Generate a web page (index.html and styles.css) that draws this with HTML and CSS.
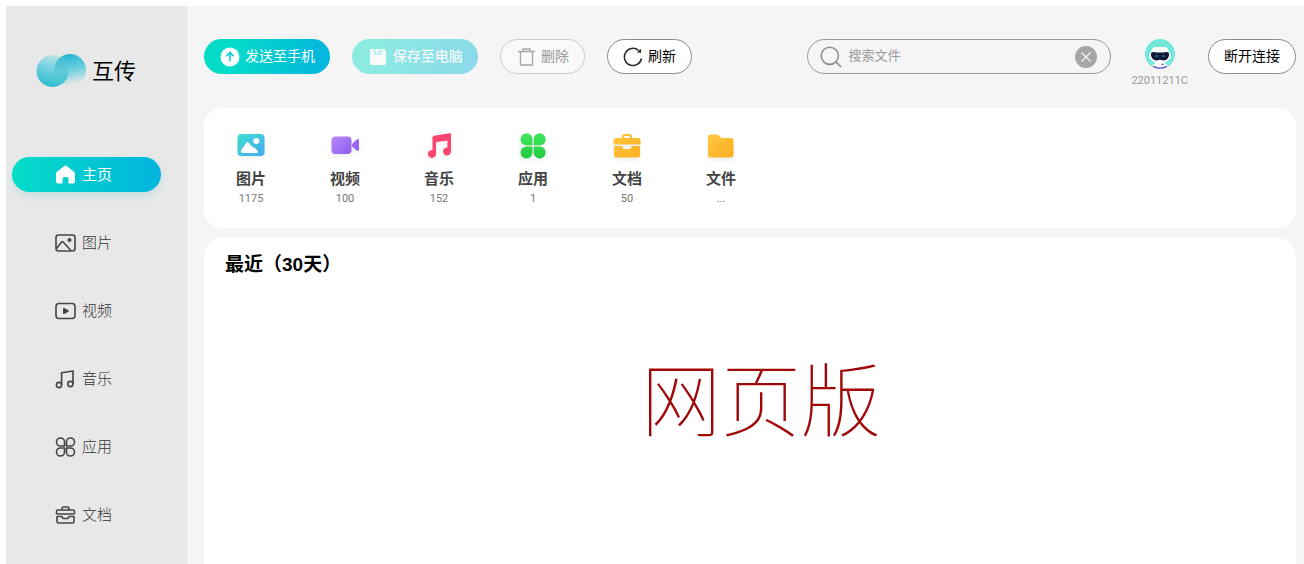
FILE: index.html
```html
<!DOCTYPE html>
<html lang="zh-CN">
<head>
	<meta charset="UTF-8">
	<title>互传</title>
	<link rel="stylesheet" href="styles.css">
</head>
<body>
	<div class="wrap">
		<div class="side">
			<div class="logo">
				<svg width="50" height="34" viewBox="0 0 50 34">
					<defs>
						<linearGradient id="lgA" x1="0.7" y1="0" x2="0.4" y2="1">
							<stop offset="0" stop-color="#c4e6e8"/>
							<stop offset="0.5" stop-color="#6fcfdb"/>
							<stop offset="1" stop-color="#2bbdd3"/>
						</linearGradient>
						<linearGradient id="lgB" x1="0.4" y1="0" x2="0.6" y2="1">
							<stop offset="0" stop-color="#27b4d3"/>
							<stop offset="0.5" stop-color="#6bcfde"/>
							<stop offset="0.95" stop-color="#e6e8e8"/>
						</linearGradient>
						<linearGradient id="lgC" gradientUnits="userSpaceOnUse" x1="26" y1="4" x2="24" y2="31">
							<stop offset="0" stop-color="#3bbcd6"/>
							<stop offset="0.5" stop-color="#62cad9"/>
							<stop offset="1" stop-color="#42c3d5"/>
						</linearGradient>
						<clipPath id="cpA"><circle cx="16.500" cy="18" r="16"/></clipPath>
					</defs>
					<circle cx="34" cy="17" r="16" fill="url(#lgB)"/>
					<circle cx="16.500" cy="18" r="16" fill="url(#lgA)"/>
					<circle cx="34" cy="17" r="16" fill="url(#lgC)" clip-path="url(#cpA)"/>
				</svg>
				<span>互传</span>
			</div>
			<ul class="nav">
				<li class="select"><a href="#">
					<svg width="21" height="20" viewBox="0 0 21 20"><path d="M10.500 0.500Q11.200 0.500 12 1.200L19 6.800Q20 7.600 20 8.800V16.500Q20 18.500 18 18.500H13.500V14Q13.500 12 11.500 12H9.500Q7.500 12 7.500 14V18.500H3Q1 18.500 1 16.500V8.800Q1 7.600 2 6.800L9 1.200Q9.800 0.500 10.500 0.500Z" fill="#fff"/></svg>
					<span>主页</span>
				</a></li>
				<li><a href="#">
					<svg class="line" width="21" height="20" viewBox="0 0 21 20"><rect x="1" y="2" width="19" height="16" rx="2.500"/><path d="M1.500 15.500L6.500 9Q7.300 8.200 8.100 9L16 17.500"/><circle cx="14.500" cy="7" r="1.600" fill="#4a4a4a" stroke-width="1"/></svg>
					<span>图片</span>
				</a></li>
				<li><a href="#">
					<svg class="line" width="21" height="20" viewBox="0 0 21 20"><rect x="1" y="2.500" width="19" height="15" rx="3"/><path d="M8.800 7.800V12.200L13 10Z" fill="#333"/></svg>
					<span>视频</span>
				</a></li>
				<li><a href="#">
					<svg class="line" width="21" height="20" viewBox="0 0 21 20"><circle cx="4" cy="16" r="2.600"/><circle cx="15.400" cy="15" r="2.600"/><path d="M6.600 16V3.800L18 2V15"/></svg>
					<span>音乐</span>
				</a></li>
				<li><a href="#">
					<svg class="line" width="21" height="20" viewBox="0 0 21 20"><path d="M9.500 9H5.500A4 4 0 1 1 9.500 5ZM11.500 9V5A4 4 0 1 1 15.500 9ZM9.500 11V15A4 4 0 1 1 5.500 11ZM11.500 11H15.500A4 4 0 1 1 11.500 15Z"/></svg>
					<span>应用</span>
				</a></li>
				<li><a href="#">
					<svg class="line" width="21" height="20" viewBox="0 0 21 20"><path d="M7 5V3.500Q7 2 8.500 2H12.500Q14 2 14 3.500V5M1.500 9V6.500Q1.500 5 3 5H18Q19.500 5 19.500 6.500V9M1.500 9H19.500M2 11.500V16.500Q2 18 3.500 18H17.500Q19 18 19 16.500V11.500H14Q13.500 13.500 12.500 13.500H8.500Q7.500 13.500 7 11.500Z"/></svg>
					<span>文档</span>
				</a></li>
			</ul>
		</div>
		<div class="main">
			<div class="head">
				<button class="btn send">
					<svg width="20" height="20" viewBox="0 0 20 20"><circle cx="10" cy="10" r="9.500" fill="#fff"/><path d="M10 14.500V5.800M6.300 9.300L10 5.500L13.700 9.300" fill="none" stroke="#0dcdcf" stroke-width="1.600"/></svg>
					<span>发送至手机</span>
				</button>
				<button class="btn send off" disabled>
					<svg width="20" height="20" viewBox="0 0 20 20"><path d="M3.500 2H6.500V6Q6.500 7.500 8 7.500H12Q13.500 7.500 13.500 6V2H16L18 4V16.500Q18 18 16.500 18H3.500Q2 18 2 16.500V3.500Q2 2 3.500 2ZM7.500 2H12.500V5.500Q12.500 6.500 11.500 6.500H8.500Q7.500 6.500 7.500 5.500ZM10.500 3V5.500H11.500V3Z" fill="#fff" fill-rule="evenodd"/></svg>
					<span>保存至电脑</span>
				</button>
				<button class="btn del" disabled>
					<svg width="20" height="20" viewBox="0 0 20 20"><path d="M2 4.500H19M7 4V2H14V4M4.500 5V18H16.500V5" fill="none" stroke="#a8a8a8" stroke-width="1.400"/></svg>
					<span>删除</span>
				</button>
				<button class="btn">
					<svg width="20" height="20" viewBox="0 0 20 20"><path d="M18.500 11.500A8.600 8.600 0 1 1 15.500 3.300" fill="none" stroke="#2b2b2f" stroke-width="1.500"/><path d="M14 5.300L17.800 1.800L18.200 6Z" fill="#2b2b2f"/></svg>
					<span>刷新</span>
				</button>
				<div class="search">
					<svg width="22" height="22" viewBox="0 0 22 22" fill="none" stroke="#8e8e8e" stroke-width="1.600"><circle cx="9.800" cy="9.800" r="8.600"/><path d="M15.900 15.900L21 21"/></svg>
					<input type="text" placeholder="搜索文件" aria-label="搜索文件">
					<button class="clear" aria-label="清空">
						<svg width="22" height="22" viewBox="0 0 22 22"><circle cx="11" cy="11" r="11" fill="#a6a6a6"/><path d="M6.500 6.500L15.500 15.500M15.500 6.500L6.500 15.500" stroke="#f5f5f5" stroke-width="1.300"/></svg>
					</button>
				</div>
				<div class="user">
					<svg width="30" height="30" viewBox="0 0 30 30">
						<circle cx="15" cy="15" r="15" fill="#75e6da"/>
						<path d="M6 13Q6.500 8 11 8H19Q23.500 8 24 13L25.500 14.500V19L24 20.500Q22 23.500 19 24L22.500 26Q23.500 28.500 21 29Q15 31 9 29Q6.500 28.500 7.500 26L11 24Q8 23.500 6 20.500L4.500 19V14.500Z" fill="#fbfbfb"/>
						<path d="M6 14.500Q6.500 12.800 10 13.200Q15 13.900 20 13.200Q23.500 12.800 24 14.500Q24.300 18.500 21.500 20.500Q19 22 16.500 21Q15 20.600 13.500 21Q11 22 8.500 20.500Q5.700 18.500 6 14.500Z" fill="#0d1a35"/>
						<path d="M10 17.500Q11.500 15.800 13 17.500M17 17.500Q18.500 15.800 20 17.500" fill="none" stroke="#3aa5cc" stroke-width="1"/>
						<path d="M8 27.300Q15 31 22 27.300M16.500 25.500H18.500" fill="none" stroke="#6357cf" stroke-width="1.400"/>
					</svg>
					<span>22011211C</span>
				</div>
				<button class="btn"><span>断开连接</span></button>
			</div>
			<ul class="types">
				<li><a href="#">
					<svg width="28" height="28" viewBox="0 0 28 28">
						<defs><linearGradient id="lgPic" x1="0" y1="0" x2="1" y2="1"><stop offset="0" stop-color="#3fe0cf"/><stop offset="1" stop-color="#45a8f2"/></linearGradient></defs>
						<rect x="0.500" y="2" width="27" height="22" rx="4" fill="url(#lgPic)"/><path d="M4 18.500L9.500 10.500Q10.500 9.500 11.500 10.500L16 15.500Q18 15 21 19.500Q21 21 19.500 21H5.500Q3.500 20.500 4 18.500Z" fill="#fff"/><circle cx="19.300" cy="9" r="3" fill="#fff"/>
					</svg>
					<b>图片</b><span>1175</span>
				</a></li>
				<li><a href="#">
					<svg width="28" height="28" viewBox="0 0 28 28">
						<defs><linearGradient id="lgVid" x1="0" y1="0" x2="1" y2="1"><stop offset="0" stop-color="#b78af5"/><stop offset="1" stop-color="#8e5cf0"/></linearGradient></defs>
						<rect x="0.500" y="4.500" width="20" height="17.500" rx="4" fill="url(#lgVid)"/><path d="M21 12L26 7.300Q28 6.500 28 8.500V17.500Q28 19.500 26 18.700L21 14.500Z" fill="#9c66ef"/>
					</svg>
					<b>视频</b><span>100</span>
				</a></li>
				<li><a href="#">
					<svg width="28" height="28" viewBox="0 0 28 28">
						<path d="M7.500 5.500Q7.500 4 9 3.700L24.500 1.200Q26 1 26 2.500V19A4 4 0 1 1 22.500 15.500V8.500L11 10V22A4 4 0 1 1 7.500 18Z" fill="#f9456f"/>
					</svg>
					<b>音乐</b><span>152</span>
				</a></li>
				<li><a href="#">
					<svg width="28" height="28" viewBox="0 0 28 28">
						<defs><linearGradient id="lgApp" x1="0" y1="0" x2="0" y2="1"><stop offset="0" stop-color="#41e65e"/><stop offset="1" stop-color="#1fcb3d"/></linearGradient></defs>
						<path d="M13.500 13.300H7.300A6 6 0 1 1 13.500 7.300ZM14.700 13.300V7.300A6 6 0 1 1 20.900 13.300ZM13.500 14.500V20.700A6 6 0 1 1 7.300 14.500ZM14.700 14.500H20.900A6 6 0 1 1 14.700 20.700Z" fill="url(#lgApp)"/>
					</svg>
					<b>应用</b><span>1</span>
				</a></li>
				<li><a href="#">
					<svg width="28" height="28" viewBox="0 0 28 28">
						<defs><linearGradient id="lgDoc" x1="0" y1="0" x2="1" y2="1"><stop offset="0" stop-color="#ffc742"/><stop offset="1" stop-color="#fdae20"/></linearGradient></defs>
						<path d="M9 6V4.500Q9 2 11.500 2H16.500Q19 2 19 4.500V6H25Q27.500 6 27.500 8.500V12.500H0.500V8.500Q0.500 6 3 6ZM11 6H17V5Q17 4 16 4H12Q11 4 11 5ZM1 14H9.500V15Q9.500 17 11.500 17H16.500Q18.500 17 18.500 15V14H27V23Q27 25.500 24.500 25.500H3.500Q1 25.500 1 23Z" fill="url(#lgDoc)" fill-rule="evenodd"/>
					</svg>
					<b>文档</b><span>50</span>
				</a></li>
				<li><a href="#">
					<svg width="28" height="28" viewBox="0 0 28 28">
						<path d="M1 5Q1 2.500 3.500 2.500H10Q11.500 2.500 12.500 4L14 6H23.500Q26.500 6 26.500 9V22.500Q26.500 25.500 23.500 25.500H4Q1 25.500 1 22.500Z" fill="url(#lgDoc)"/>
					</svg>
					<b>文件</b><span>...</span>
				</a></li>
			</ul>
			<div class="recent">
				<h2>最近（30天）</h2>
				<p class="web">网页版</p>
			</div>
		</div>
	</div>
</body>
</html>
```
FILE: styles.css
```css
*{
	margin: 0;
	padding: 0;
	box-sizing: border-box;
}
body{
	padding: 6px 0 0 6px;
	background: #fff;
	font-family: "Liberation Sans", "Noto Sans CJK SC", sans-serif;
	color: #000;
}
ul{
	list-style: none;
}
a{
	color: inherit;
	text-decoration: none;
}
svg{
	flex: none;
}
.wrap{
	display: flex;
	min-height: calc(100vh - 6px);
	background: #f5f5f5;
}
/* 左侧导航 */
.side{
	flex: none;
	width: 181px;
	padding: 47px 26px 0 6px;
	background: #e8e8e8;
}
.logo{
	display: flex;
	align-items: center;
	gap: 6px;
	height: 34px;
	padding-left: 24px;
	font-size: 22px;
}
.logo span,.nav span,.btn span{
	padding-bottom: 3px;
}
.nav{
	display: flex;
	flex-direction: column;
	gap: 33px;
	margin-top: 70px;
}
.nav a{
	display: flex;
	align-items: center;
	gap: 6px;
	height: 35px;
	padding-left: 43px;
	border-radius: 18px;
	font-size: 15px;
	font-weight: 300;
	color: #333;
}
.nav .select a{
	background: linear-gradient(90deg, #04dcc8, #02b4de);
	box-shadow: 0 4px 8px rgba(60, 190, 210, .2);
	color: #fff;
	font-weight: 400;
}
.line{
	fill: none;
	stroke: #444;
	stroke-width: 1.6;
	stroke-linejoin: round;
}
/* 右侧 */
.main{
	flex: 1;
	display: flex;
	flex-direction: column;
	gap: 10px;
	min-width: 0;
	padding: 33px 8px 0 17px;
}
.head{
	display: flex;
	align-items: flex-start;
	gap: 22px;
	height: 59px;
}
.btn{
	display: flex;
	flex: none;
	align-items: center;
	justify-content: center;
	gap: 5px;
	height: 35px;
	padding: 0 15px;
	border: 1px solid #8c8c8c;
	border-radius: 18px;
	background: #fff;
	font-family: inherit;
	font-size: 14px;
	color: #000;
	white-space: nowrap;
}
.send{
	padding: 0 15px 0 16px;
	border: none;
	background: linear-gradient(100deg, #04dcc8 20%, #02b4de);
	color: #fff;
}
.off{
	opacity: .43;
}
.off span{
	font-weight: 500;
}
.del{
	border-color: #ccc;
	background: #f9f9f9;
	color: #999;
}
.search{
	display: flex;
	flex: 0 1 304px;
	align-items: center;
	gap: 6px;
	min-width: 120px;
	height: 35px;
	margin-left: auto;
	padding: 0 13px 0 12px;
	border: 1px solid #999;
	border-radius: 18px;
}
.search input{
	flex: 1;
	min-width: 0;
	padding-bottom: 2px;
	border: none;
	outline: none;
	background: none;
	font-family: inherit;
	font-size: 13px;
}
.search input::placeholder{
	color: #999;
}
.clear{
	display: flex;
	border: none;
	background: none;
}
.user{
	display: flex;
	flex: none;
	flex-direction: column;
	align-items: center;
	gap: 5px;
	margin: 0 -2px;
	font-family: Roboto, sans-serif;
	font-size: 11px;
	line-height: 14px;
	color: #999;
}
.types{
	display: flex;
	height: 120px;
	padding-top: 24px;
	border-radius: 18px;
	background: #fff;
}
.types li{
	flex: 0 1 94px;
}
.types a{
	display: flex;
	flex-direction: column;
	align-items: center;
	color: #444;
}
.types svg{
	filter: drop-shadow(0 2px 2px rgba(120, 120, 120, .15));
}
.types b{
	margin-top: 9px;
	font-size: 15px;
	line-height: 20px;
}
.types span{
	margin-top: 3px;
	font-family: Roboto, sans-serif;
	font-size: 11px;
	line-height: 14px;
	color: #777;
}
.recent{
	flex: 1;
	padding: 13px 21px;
	border-radius: 18px 18px 0 0;
	background: #fff;
}
.recent h2{
	font-size: 19px;
	line-height: 28px;
}
.web{
	margin-top: 64px;
	padding-left: 22px;
	font-size: 80px;
	font-weight: 100;
	line-height: 120px;
	text-align: center;
	color: #a00808;
}
```
